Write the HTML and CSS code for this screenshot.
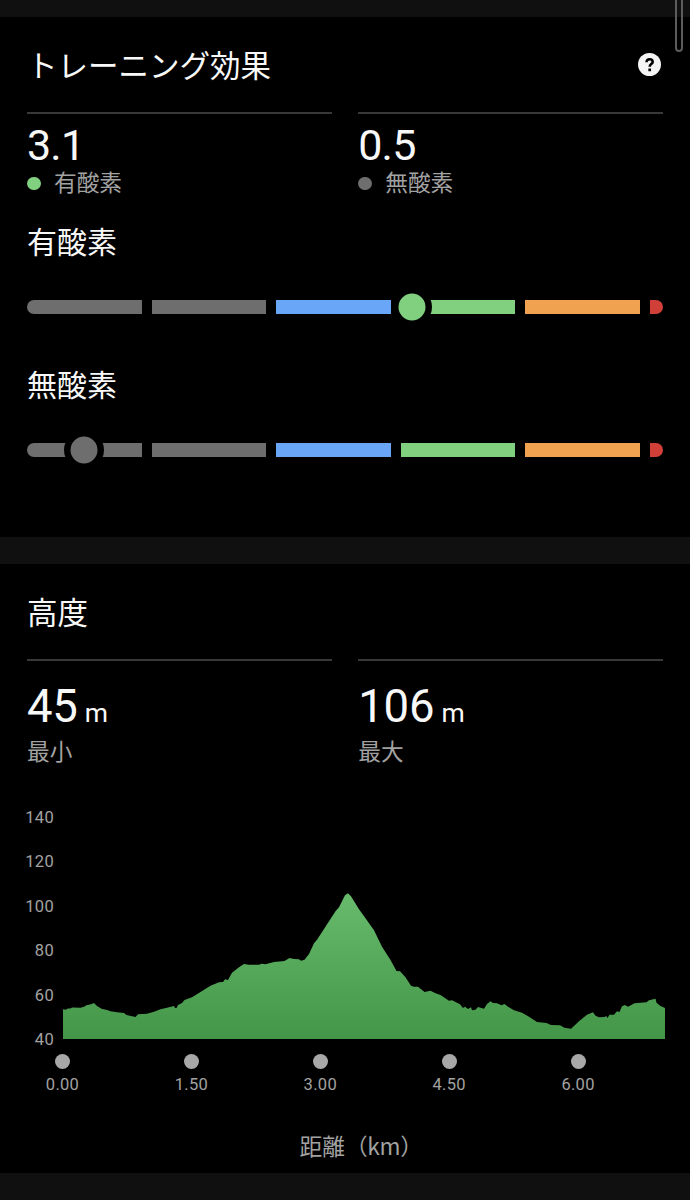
FILE: index.html
```
<!DOCTYPE html>
<html lang="ja">
<head>
    <meta charset="UTF-8">
    <meta name="viewport" content="width=device-width, initial-scale=1.0">
    <title>トレーニング効果</title>
    <link rel="stylesheet" href="styles.css">
</head>
<body>
    <div class="scrollbar"></div>

    <section class="card training">
        <div class="card-header">
            <h2>トレーニング効果</h2>
            <svg class="help" viewBox="0 0 24 24">
                <circle cx="12" cy="12" r="12" fill="#f5f5f5"/>
                <path d="M8.9 9.6C8.9 7.4 10.2 6.5 12.1 6.5s3.2 1 3.2 2.8c0 2.3-3.1 2.3-3.1 5" fill="none" stroke="#000" stroke-width="2.7"/>
                <rect x="10.8" y="16.2" width="2.8" height="2.8" fill="#000"/>
            </svg>
        </div>
        <div class="stats">
            <div class="stat">
                <div class="value">3.1</div>
                <div class="label"><span class="dot green"></span>有酸素</div>
            </div>
            <div class="stat">
                <div class="value">0.5</div>
                <div class="label"><span class="dot gray"></span>無酸素</div>
            </div>
        </div>

        <h3>有酸素</h3>
        <div class="gauge">
            <span class="segment gray"></span>
            <span class="segment gray"></span>
            <span class="segment blue"></span>
            <span class="segment green"></span>
            <span class="segment orange"></span>
            <span class="segment red"></span>
            <span class="thumb green" style="left: 60.5%"></span>
        </div>

        <h3>無酸素</h3>
        <div class="gauge">
            <span class="segment gray"></span>
            <span class="segment gray"></span>
            <span class="segment blue"></span>
            <span class="segment green"></span>
            <span class="segment orange"></span>
            <span class="segment red"></span>
            <span class="thumb gray" style="left: 9%"></span>
        </div>
    </section>

    <section class="card elevation">
        <div class="card-header">
            <h2>高度</h2>
        </div>
        <div class="stats">
            <div class="stat">
                <div class="value">45<span class="unit">m</span></div>
                <div class="label">最小</div>
            </div>
            <div class="stat">
                <div class="value">106<span class="unit">m</span></div>
                <div class="label">最大</div>
            </div>
        </div>

        <div class="chart">
            <div class="y-axis">
                <span>140</span>
                <span>120</span>
                <span>100</span>
                <span>80</span>
                <span>60</span>
                <span>40</span>
            </div>
            <svg class="area" viewBox="0 0 602 239">
                <defs>
                    <linearGradient id="areaFill" gradientUnits="userSpaceOnUse" x1="0" y1="93" x2="0" y2="239">
                        <stop offset="0" stop-color="#68bb6c"/>
                        <stop offset="1" stop-color="#439547"/>
                    </linearGradient>
                </defs>
                <path fill="url(#areaFill)" d="M0 239V209.3L3 209.7 4 208.7 8 208.3 9 207.5 17.5 207.7 21 206.7 23.5 205.3 28 204.3 31 203 34 206 38.5 208.7 44 210 47.5 211.3 54 212.3 61 213 63.5 215 69 216.3 72.5 217 75 214.3 84 213.7 91 211.7 97.5 209.3 104 207.7 111 206 112 208 113.5 208 115 205 119 203 121.5 200 129 197.3 137.5 192 147.5 185.7 156 182.3 160 182 162 179.3 165 180 169 172.7 176 167.3 181 164 186 164.7 196 164.7 198.5 163.7 202.5 164.3 211 162 221.5 161 226.5 158 231 159 236 159.3 238 160.7 241.5 159.7 246 154 251 143.3 254 139.7 261 129 272.5 111.3 276 107.3 282 95.3 285 93.3 288 96.3 296 109.3 302.5 118.3 311 130.3 319 146.7 327.5 160 333.5 171 337 171.3 342.5 177.3 348 185.7 351 186.7 355 186.7 361.5 192 367.5 190.8 372.5 193.3 377.5 195 386 200.7 389 200.3 397 204.3 400 208 402 206.7 405 209 408 207.3 409 210.3 412.5 209.7 415 207 421 208.7 424 204 427.5 201.3 430 203 434 203.3 438.5 205.3 441.5 204 445 206.7 451 210.3 459 212.7 466 216.7 474 222 483.5 223 488 225 497 225.3 501.5 227.7 508 228.7 516 221.3 524 214.7 530 212.3 532.5 215.7 536 217.3 542 217 543 215.8 544.5 218 546.5 214.7 551 214.7 554 211.3 556.5 212 559 206.3 562 205 565 206.7 571.5 203.3 583.5 202.3 586 200.3 592.5 198.7 593.5 202.7 597.5 206 602 208V239Z"/>
            </svg>
        </div>
        <div class="x-axis">
            <span class="tick">0.00</span>
            <span class="tick">1.50</span>
            <span class="tick">3.00</span>
            <span class="tick">4.50</span>
            <span class="tick">6.00</span>
        </div>
        <div class="axis-title">距離<span class="axis-unit">（km）</span></div>
    </section>
</body>
</html>
```
FILE: styles.css
```
* {
    margin: 0;
    padding: 0;
    box-sizing: border-box;
}

body {
    width: 690px;
    height: 1200px;
    overflow: hidden;
    padding-top: 16.5px;
    background: #101010;
    color: #f8f8f8;
    font-family: Roboto, 'Noto Sans CJK JP', sans-serif;
}

.scrollbar {
    position: absolute;
    top: -20px;
    right: 7px;
    width: 8px;
    height: 72px;
    border: 2px solid #5c5c5c;
    border-radius: 4px;
}

.card {
    background: #000;
    padding: 0 27px;
}

.training {
    height: 520.5px;
    margin-bottom: 27px;
}

.elevation {
    height: 608.5px;
}

.card-header {
    display: flex;
    justify-content: space-between;
    align-items: center;
    height: 95px;
}

h2,
h3 {
    font-size: 30px;
    font-weight: 400;
    line-height: 40px;
}

h2 {
    font-size: 30.5px;
    padding-top: 5px;
}

.help {
    width: 23px;
    height: 23px;
    margin-right: 2px;
}

.stats {
    display: grid;
    grid-template-columns: 1fr 1fr;
    gap: 26.5px;
}

.stat {
    border-top: 2px solid #383838;
}

.value {
    font-size: 43px;
    letter-spacing: -0.8px;
    line-height: 50px;
    margin-top: 6px;
}

.unit {
    font-size: 26.5px;
    margin-left: 7px;
}

.label {
    display: flex;
    align-items: center;
    font-size: 22.7px;
    line-height: 28px;
    color: #a2a2a2;
}

.dot {
    width: 13.5px;
    height: 13.5px;
    margin-right: 13.5px;
    border-radius: 50%;
}

.training h3 {
    margin-top: 25px;
}

.gauge {
    position: relative;
    display: flex;
    gap: 10px;
    height: 14px;
    margin: 37px 0 52px;
}

.segment {
    flex: 1;
}

.segment:first-child {
    border-radius: 7px 0 0 7px;
}

.segment.red {
    flex: 0 0 13.5px;
    border-radius: 0 7px 7px 0;
}

.training .gauge + h3 {
    margin-top: 0;
}

.thumb {
    position: absolute;
    top: 50%;
    width: 27px;
    height: 27px;
    border-radius: 50%;
    box-shadow: 0 0 0 6.5px #000;
    transform: translate(-50%, -50%);
}

.gray { background: #6e6e6e; }
.blue { background: #6aa6f8; }
.green { background: #81d07f; }
.orange { background: #f0a250; }
.red { background: #d03f38; }

.elevation .value {
    font-size: 45.5px;
    letter-spacing: -0.2px;
    line-height: 54px;
    margin-top: 19px;
}

.elevation .label {
    margin-top: -1px;
}

.chart {
    display: flex;
    height: 239px;
    margin: 33px -1.5px 0 -7px;
}

.y-axis {
    display: flex;
    flex-direction: column;
    justify-content: space-between;
    width: 34px;
    height: 242px;
    margin: 8px 8.5px 0 0;
    text-align: right;
}

.y-axis span,
.tick {
    font-size: 16.5px;
    line-height: 20px;
    letter-spacing: 0.3px;
    color: #a2a2a2;
}

.area {
    width: 602px;
    height: 239px;
}

.x-axis {
    display: flex;
    gap: 68.9px;
    margin: 15px 0 0 5.5px;
}

.tick {
    display: flex;
    flex-direction: column;
    align-items: center;
    gap: 6px;
    width: 60px;
}

.tick::before {
    content: '';
    width: 15px;
    height: 15px;
    border-radius: 50%;
    background: #a8a8a8;
}

.axis-title {
    margin: 35px 0 0 272.5px;
    font-size: 22.7px;
    line-height: 32px;
    color: #a2a2a2;
}

.axis-unit {
    font-family: 'Noto Sans CJK JP', sans-serif;
    letter-spacing: -0.3px;
}
```
